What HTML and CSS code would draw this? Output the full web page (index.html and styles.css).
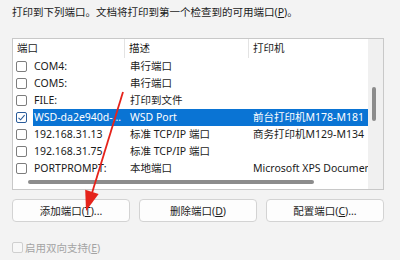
FILE: index.html
```html
<!DOCTYPE html>
<html lang="zh-CN">
<head>
    <meta charset="UTF-8">
    <title>端口</title>
    <link rel="stylesheet" href="styles.css">
</head>
<body>
    <div class="dialog">
        <p class="intro">打印到下列端口。文档将打印到第一个检查到的可用端口(<u>P</u>)。</p>

        <div class="ports">
            <div class="view">
                <div class="row head">
                    <div class="cell c1">端口</div>
                    <div class="cell c2">描述</div>
                    <div class="cell c3">打印机</div>
                </div>
                <div class="row">
                    <div class="cell c1"><span class="box"></span><span class="name">COM4:</span></div>
                    <div class="cell c2">串行端口</div>
                    <div class="cell c3"></div>
                </div>
                <div class="row">
                    <div class="cell c1"><span class="box"></span><span class="name">COM5:</span></div>
                    <div class="cell c2">串行端口</div>
                    <div class="cell c3"></div>
                </div>
                <div class="row">
                    <div class="cell c1"><span class="box"></span><span class="name">FILE:</span></div>
                    <div class="cell c2">打印到文件</div>
                    <div class="cell c3"></div>
                </div>
                <div class="row sel">
                    <div class="cell c1"><span class="box on"><svg width="9" height="9" viewBox="0 0 9 9"><path d="M1.5 4.8 L3.6 6.8 L7.6 2.2" fill="none" stroke="#2a5c9a" stroke-width="1.1"/></svg></span><span class="name">WSD-da2e940d-5b3c-4e1f</span></div>
                    <div class="cell c2">WSD Port</div>
                    <div class="cell c3">前台打印机M178-M181</div>
                </div>
                <div class="row">
                    <div class="cell c1"><span class="box"></span><span class="name">192.168.31.13</span></div>
                    <div class="cell c2">标准 TCP/IP 端口</div>
                    <div class="cell c3">商务打印机M129-M134</div>
                </div>
                <div class="row">
                    <div class="cell c1"><span class="box"></span><span class="name">192.168.31.75</span></div>
                    <div class="cell c2">标准 TCP/IP 端口</div>
                    <div class="cell c3"></div>
                </div>
                <div class="row">
                    <div class="cell c1"><span class="box"></span><span class="name">PORTPROMPT:</span></div>
                    <div class="cell c2">本地端口</div>
                    <div class="cell c3">Microsoft XPS Document Writer</div>
                </div>
            </div>
            <div class="vscroll"><div class="thumb-v"></div></div>
            <div class="hscroll"><div class="thumb-h"></div></div>
        </div>

        <div class="buttons">
            <button type="button">添加端口(<u>T</u>)...</button>
            <button type="button">删除端口(<u>D</u>)</button>
            <button type="button">配置端口(<u>C</u>)...</button>
        </div>

        <label class="bidi"><span class="box off"></span>启用双向支持(<u>E</u>)</label>
    </div>

    <svg class="arrow" width="400" height="260" viewBox="0 0 400 260">
        <line x1="123" y1="92" x2="92" y2="193" stroke="#e5231b" stroke-width="1.8"/>
        <polygon points="86,211 98.6,194 85.2,189.8" fill="#e5231b"/>
    </svg>
</body>
</html>
```

FILE: styles.css
```css
body {
    margin: 0;
    background: #f3f3f3;
    font-family: "Noto Sans", "Noto Sans CJK SC", sans-serif;
    font-size: 10.5px;
    color: #1b1b1b;
    width: 400px;
    height: 260px;
    overflow: hidden;
}
.dialog {
    padding: 4px 16px 0 12px;
}
.intro {
    margin: 0 0 18px;
    line-height: 16px;
}
.ports {
    display: grid;
    grid-template-columns: 355px 15px;
    grid-template-rows: 138px 12px;
    border: 1px solid #c8c8c8;
    background: #fff;
    width: 370px;
}
.view {
    overflow: hidden;
}
.row {
    display: grid;
    grid-template-columns: 112px 124px 170px;
    height: 17px;
    line-height: 17px;
}
.row.head {
    height: 19px;
    line-height: 19px;
}
.cell {
    overflow: hidden;
    white-space: nowrap;
}
.head .cell {
    padding-left: 4px;
}
.head .c1, .head .c2 {
    border-right: 1px solid #e3e3e3;
}
.c1 {
    display: flex;
    align-items: center;
}
.c2 {
    padding-left: 5px;
}
.c3 {
    padding-left: 4px;
}
.name {
    flex: 1;
    min-width: 0;
    overflow: hidden;
    text-overflow: ellipsis;
    padding-left: 1px;
}
.box {
    flex: none;
    box-sizing: border-box;
    width: 11px;
    height: 11px;
    margin: 0 6px 0 3px;
    border: 1px solid #7d7d7d;
    border-radius: 2px;
    background: #fff;
    display: inline-flex;
    align-items: center;
    justify-content: center;
}
.box.on {
    border-color: #2a5c9a;
}
.sel .name, .sel .c2, .sel .c3 {
    background: #0a74d4;
    color: #fff;
}
.vscroll {
    grid-row: 1 / 3;
    grid-column: 2;
    background: #f0f0f0;
    padding-top: 48px;
}
.thumb-v {
    width: 4px;
    height: 34px;
    margin-left: 4px;
    background: #8c8c8c;
    border-radius: 2px;
}
.hscroll {
    padding-top: 3px;
}
.thumb-h {
    width: 286px;
    height: 4px;
    margin-left: 15px;
    background: #8c8c8c;
    border-radius: 2px;
}
.buttons {
    display: grid;
    grid-template-columns: repeat(3, 1fr);
    gap: 9px;
    width: 372px;
    margin-top: 9px;
}
button {
    height: 23px;
    padding: 0;
    border: 1px solid #d3d3d3;
    border-radius: 4px;
    background: #fdfdfd;
    font-family: inherit;
    font-size: 10.5px;
    color: #1b1b1b;
}
.bidi {
    display: flex;
    align-items: center;
    margin-top: 18px;
    color: #a3a3a3;
}
.bidi .box {
    margin: 0 2px 0 0;
    border-color: #cfcfcf;
    background: #f7f7f7;
}
.arrow {
    position: absolute;
    left: 0;
    top: 0;
    pointer-events: none;
}
```
